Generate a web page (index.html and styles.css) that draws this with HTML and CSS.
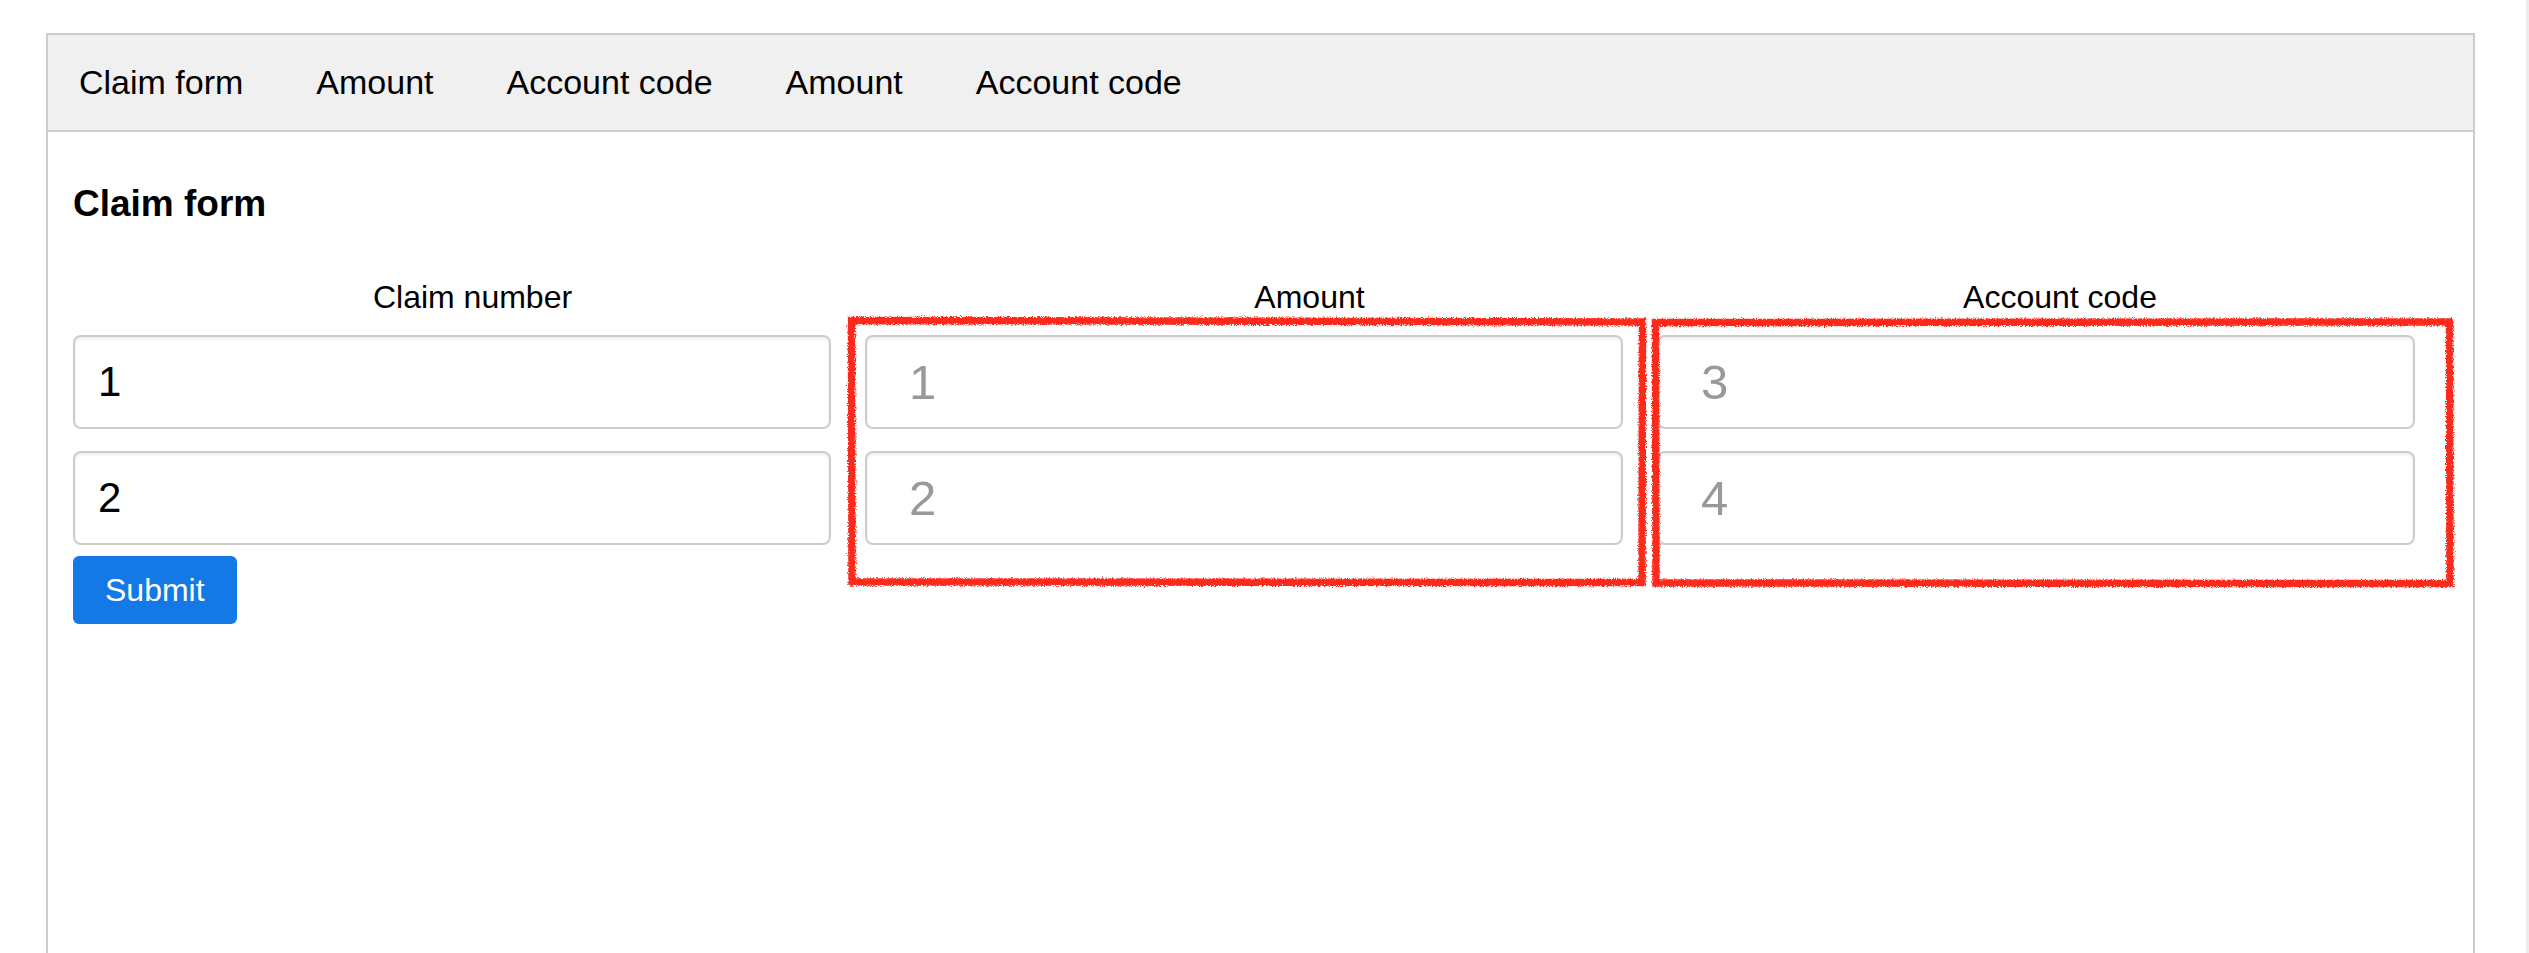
FILE: index.html
```html
<!DOCTYPE html>
<html lang="en">
<head>
<meta charset="utf-8">
<title>Claim form</title>
<link rel="stylesheet" href="styles.css">
</head>
<body>
<div class="page">
  <div class="frame">
    <nav class="tabs">
      <span class="tab">Claim form</span>
      <span class="tab">Amount</span>
      <span class="tab">Account code</span>
      <span class="tab">Amount</span>
      <span class="tab">Account code</span>
    </nav>
    <main class="content">
      <h3 class="title">Claim form</h3>
      <form class="claim">
        <div class="grid labels">
          <div class="label label-c1">Claim number</div>
          <div class="label label-c2">Amount</div>
          <div class="label label-c3">Account code</div>
        </div>
        <div class="grid fields">
          <div class="col">
            <input class="field" type="text" value="1">
            <input class="field" type="text" value="2">
            <button class="submit" type="button">Submit</button>
          </div>
          <div class="col">
            <input class="field field-ghost" type="text" placeholder="1">
            <input class="field field-ghost" type="text" placeholder="2">
          </div>
          <div class="col">
            <input class="field field-ghost" type="text" placeholder="3">
            <input class="field field-ghost" type="text" placeholder="4">
          </div>
        </div>
      </form>
    </main>
  </div>
  <svg class="marks" width="2529" height="953" viewBox="0 0 2529 953" aria-hidden="true">
    <defs>
      <filter id="rough" x="-5%" y="-5%" width="110%" height="110%">
        <feTurbulence type="fractalNoise" baseFrequency="0.9" numOctaves="2" seed="3" result="noise"/>
        <feDisplacementMap in="SourceGraphic" in2="noise" scale="5" xChannelSelector="R" yChannelSelector="G"/>
      </filter>
    </defs>
    <g fill="none" stroke="#fd2c1f" stroke-width="7.5" filter="url(#rough)">
      <path d="M851.5 320.5 L1642.5 322 L1642 582.5 L852 582 Z"/>
      <path d="M1655.5 322.5 L2449.5 322 L2450 583.5 L1656 583 Z"/>
    </g>
  </svg>
</div>
</body>
</html>
```

FILE: styles.css
```css
html, body {
  margin: 0;
  padding: 0;
  overflow: hidden;
  background: #ffffff;
}

body {
  font-family: "Liberation Sans", Arial, Helvetica, sans-serif;
  color: #000;
  height: 953px;
  box-sizing: border-box;
  border-right: 3px solid #ececec;
}

.page {
  position: relative;
  padding: 33px 0 0 46px;
}

.frame {
  box-sizing: border-box;
  width: 2429px;
  min-height: 1000px;
  border: 2px solid #cccccc;
  border-bottom: none;
  background: #ffffff;
}

.tabs {
  display: flex;
  align-items: center;
  gap: 73px;
  height: 95px;
  padding-left: 31px;
  background: #f0f0f0;
  border-bottom: 2px solid #cccccc;
}

.tab {
  font-size: 34px;
  color: #000;
  white-space: nowrap;
}

.content {
  padding: 50px 58px 0 25px;
}

.title {
  margin: 0;
  font-size: 37px;
  line-height: 43px;
  font-weight: bold;
}

.claim {
  margin-top: 54px;
}

.grid {
  display: grid;
  grid-template-columns: repeat(3, 1fr);
  column-gap: 34px;
}

.label {
  font-size: 32px;
  line-height: 37px;
  text-align: center;
  white-space: nowrap;
}

.label-c1 { padding-left: 41px; }
.label-c2 { padding-left: 131px; }
.label-c3 { padding-left: 48px; }

.fields {
  margin-top: 19px;
}

.col {
  display: flex;
  flex-direction: column;
  align-items: flex-start;
}

.field {
  box-sizing: border-box;
  width: 100%;
  height: 94px;
  margin: 0;
  padding: 0 23px;
  border: 2px solid #cccccc;
  border-radius: 8px;
  box-shadow: inset 0 2px 3px rgba(0, 0, 0, 0.07);
  background: #ffffff;
  font-family: "Liberation Sans", Arial, Helvetica, sans-serif;
  font-size: 42px;
  color: #000;
  outline: none;
}

.field + .field {
  margin-top: 22px;
}

.field-ghost {
  padding-left: 42px;
  font-size: 49px;
}

.field-ghost::placeholder {
  color: #999999;
  opacity: 1;
}

.submit {
  margin-top: 11px;
  height: 68px;
  padding: 0 32px;
  border: none;
  border-radius: 6px;
  background: #1479e6;
  color: #ffffff;
  font-family: "Liberation Sans", Arial, Helvetica, sans-serif;
  font-size: 32px;
  line-height: 68px;
  cursor: pointer;
}

.marks {
  position: absolute;
  left: 0;
  top: 0;
  pointer-events: none;
}
```
